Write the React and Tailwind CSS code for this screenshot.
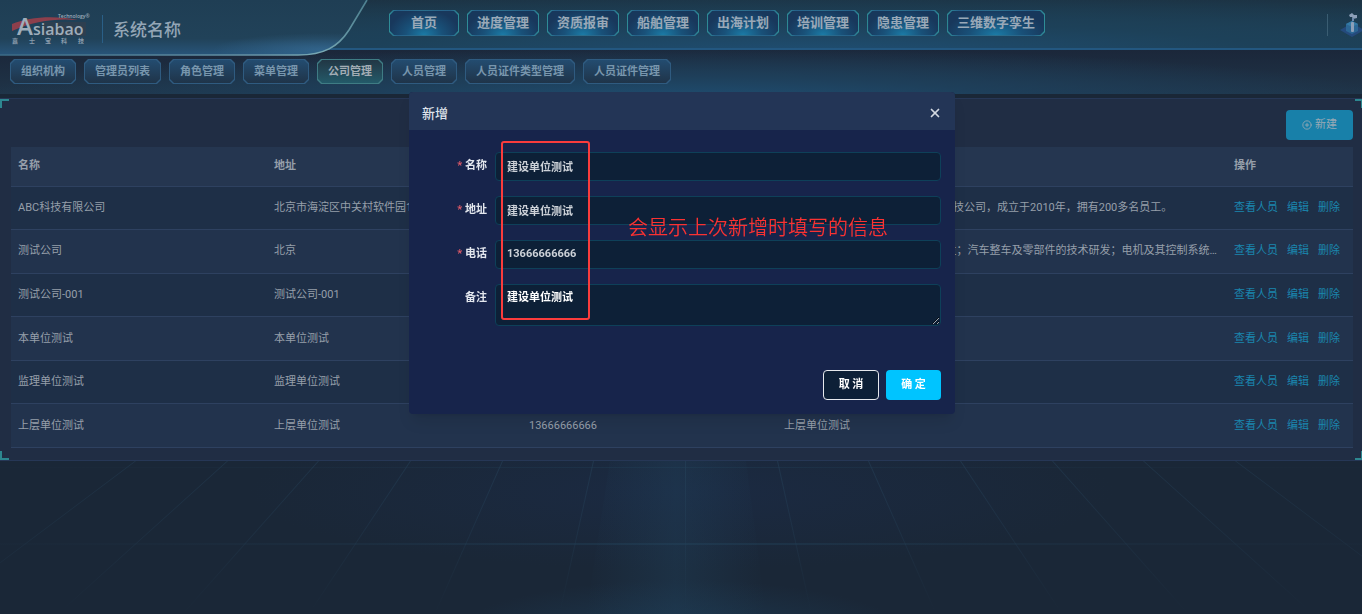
import React, { useState } from 'react';
import { CirclePlus, X } from 'lucide-react';

const mainNav = ['首页', '进度管理', '资质报审', '船舶管理', '出海计划', '培训管理', '隐患管理', '三维数字孪生'];

const subNav = ['组织机构', '管理员列表', '角色管理', '菜单管理', '公司管理', '人员管理', '人员证件类型管理', '人员证件管理'];

const companies = [
  {
    name: 'ABC科技有限公司',
    address: '北京市海淀区中关村软件园1号楼',
    phone: '13800138000',
    remark: 'ABC科技有限公司, 是一家领先的科技公司，成立于2010年，拥有200多名员工。',
  },
  {
    name: '测试公司',
    address: '北京',
    phone: '13666666666',
    remark: '新能源汽车(含动力电池)技术的研发；汽车整车及零部件的技术研发；电机及其控制系统等。',
  },
  { name: '测试公司-001', address: '测试公司-001', phone: '13666666666', remark: '' },
  { name: '本单位测试', address: '本单位测试', phone: '13666666666', remark: '本单位测试' },
  { name: '监理单位测试', address: '监理单位测试', phone: '13666666666', remark: '监理单位测试' },
  { name: '上层单位测试', address: '上层单位测试', phone: '13666666666', remark: '上层单位测试' },
];

const fields = [
  { id: 'name', label: '名称' },
  { id: 'address', label: '地址' },
  { id: 'phone', label: '电话' },
];

function Logo() {
  return (
    <svg className="w-[80px] h-8 shrink-0 overflow-visible" viewBox="0 0 80 32" role="img" aria-label="Asiabao">
      <rect x="30" y="9" width="44" height="14" fill="#2d3f50" />
      <path d="M0 11 C16 4 42 2 66 7 C44 5 22 8 0 18 Z" fill="#8d3f4c" />
      <g fill="#9fadba" fontFamily="Open Sans, sans-serif" fontWeight="600">
        <text x="46" y="5" fontSize="5">Technology®</text>
        <text x="5" y="22" fontSize="24">A</text>
        <text x="21" y="22" fontSize="16">siabao</text>
      </g>
      <g fill="#8b9cac" fontFamily="Noto Sans CJK SC, sans-serif" fontSize="6" fontWeight="700">
        <text x="0" y="30">嘉</text>
        <text x="17" y="30">士</text>
        <text x="33" y="30">宝</text>
        <text x="49" y="30">科</text>
        <text x="66" y="30">技</text>
      </g>
    </svg>
  );
}

function HeaderShape() {
  return (
    <svg className="absolute left-0 top-0 w-[370px] h-[58px]" viewBox="0 0 370 58" aria-hidden="true">
      <defs>
        <linearGradient id="plate" x1="0" y1="0" x2="0" y2="1">
          <stop offset="0" stopColor="#1f3e54" />
          <stop offset="0.7" stopColor="#214259" />
          <stop offset="1" stopColor="#28557a" />
        </linearGradient>
        <radialGradient id="plateGlow" cx="0.88" cy="0.9" r="0.3">
          <stop offset="0" stopColor="#39719c" stopOpacity="0.6" />
          <stop offset="1" stopColor="#39719c" stopOpacity="0" />
        </radialGradient>
        <linearGradient id="plateEdge" x1="0" y1="0" x2="1" y2="0">
          <stop offset="0" stopColor="#3b6a86" />
          <stop offset="0.7" stopColor="#6793a6" />
          <stop offset="0.88" stopColor="#79a9b4" />
          <stop offset="1" stopColor="#4d8090" />
        </linearGradient>
      </defs>
      <path d="M0 0 H367 L349 30 C338 47 324 55 298 55 H0 Z" fill="url(#plate)" />
      <path d="M0 0 H367 L349 30 C338 47 324 55 298 55 H0 Z" fill="url(#plateGlow)" />
      <path d="M367 0 L349 30 C338 47 324 55 298 55 H0" fill="none" stroke="url(#plateEdge)" strokeWidth="1.6" />
    </svg>
  );
}

function PlatformIcon() {
  return (
    <svg className="w-6 h-[26px] shrink-0" viewBox="0 0 24 26" aria-hidden="true">
      <path d="M12 11 L24 18 L12 25 L0 18 Z" fill="#254a7c" />
      <path d="M12 9 L18 12 V19 L12 22 L6 19 V12 Z" fill="#2c6795" />
      <path d="M12 9 L18 12 L12 15 L6 12 Z" fill="#347aa5" />
      <path d="M9 3 L12 1 L14 3 L17 3 L17 6 L13 7 L12 5 L10 5 Z" fill="#8c9fb8" />
      <path d="M12 6 H14 V9 H12 Z" fill="#6d88ab" />
      <rect x="11" y="10" width="3" height="10" rx="1" fill="#8c9fb8" />
    </svg>
  );
}

// perspective grid under the panel
function Floor() {
  const tops = [135, 227, 318, 410, 502, 593, 685, 777, 868, 960, 1052, 1143, 1235];
  return (
    <svg className="absolute inset-0 w-full h-full" viewBox="0 0 1362 153" preserveAspectRatio="none" aria-hidden="true">
      <defs>
        <linearGradient id="ray" x1="0" y1="0" x2="0" y2="1">
          <stop offset="0" stopColor="#26445c" stopOpacity="0.5" />
          <stop offset="0.6" stopColor="#26445c" stopOpacity="0.25" />
          <stop offset="1" stopColor="#26445c" stopOpacity="0" />
        </linearGradient>
        <linearGradient id="row" x1="0" y1="0" x2="1" y2="0">
          <stop offset="0" stopColor="#1f3346" stopOpacity="0.2" />
          <stop offset="0.5" stopColor="#22425a" />
          <stop offset="1" stopColor="#1f3346" stopOpacity="0.2" />
        </linearGradient>
        <linearGradient id="beam" x1="0" y1="0" x2="1" y2="0">
          <stop offset="0" stopColor="#20405a" stopOpacity="0" />
          <stop offset="0.5" stopColor="#20405a" stopOpacity="0.4" />
          <stop offset="1" stopColor="#20405a" stopOpacity="0" />
        </linearGradient>
      </defs>
      <path d="M610 0 H746 L766 153 H586 Z" fill="url(#beam)" />
      {tops.map(x => {
        const end = x + (x - 685) * 0.37;
        return <polygon key={x} points={`${x},0 ${x + 1},0 ${end + 1},153 ${end},153`} fill="url(#ray)" />;
      })}
      <rect x="0" y="6" width="1362" height="1" fill="url(#row)" opacity="0.4" />
      <rect x="0" y="82" width="1362" height="2" fill="url(#row)" opacity="0.5" />
    </svg>
  );
}

const cut = '[clip-path:polygon(4px_0,calc(100%-4px)_0,100%_4px,100%_calc(100%-4px),calc(100%-4px)_100%,4px_100%,0_calc(100%-4px),0_4px)]';

function MainNavButton({ label }) {
  return (
    <button className={`flex h-[26px] min-w-[70px] p-px bg-[linear-gradient(90deg,#2f8f98,#26618a_12%,#2b6f8d_50%,#26618a_88%,#2f8f98)] ${cut}`}>
      <span className={`flex flex-1 items-center justify-center px-[9px] text-[13px] leading-5 font-bold text-[#9aa9b8] bg-[radial-gradient(ellipse_at_50%_100%,#1b7ba6_0%,#195179_38%,#18385c_75%)] ${cut}`}>
        {label}
      </span>
    </button>
  );
}

function SubNavButton({ label, active }) {
  return (
    <button
      aria-current={active ? 'page' : undefined}
      className={`flex h-[25px] p-px ${cut} ${active ? 'bg-[#3f7c84]' : 'bg-[#2f5b80]'}`}
    >
      <span
        className={`flex flex-1 items-center px-[10px] text-[11px] leading-4 font-bold ${cut} ${
          active
            ? 'text-[#a3adb5] bg-linear-to-b from-[#213745] to-[#235a69]'
            : 'text-[#7896ad] bg-linear-to-b from-[#234c70] to-[#1f3449]'
        }`}
      >
        {label}
      </span>
    </button>
  );
}

function CompanyTable() {
  return (
    <table className="w-full h-[301px] table-fixed border-collapse text-[11px] leading-4 text-left text-[#969faa]">
      <thead>
        <tr className="h-[39px] bg-[#253650] border-b border-[#2e4160]">
          <th className="w-64 px-[7px] font-bold">名称</th>
          <th className="w-[19%] px-[7px] font-bold">地址</th>
          <th className="w-[19%] px-[7px] font-bold">电话</th>
          <th className="px-[7px] font-bold">备注</th>
          <th className="w-[126px] px-[7px] font-bold">操作</th>
        </tr>
      </thead>
      <tbody>
        {companies.map(company => (
          <tr key={company.name} className="h-[43px] border-b border-[#2e4160] odd:bg-[#1e2f47] even:bg-[#22334d]">
            <td className="px-[7px] truncate">{company.name}</td>
            <td className="px-[7px] truncate">{company.address}</td>
            <td className="px-[7px] truncate">{company.phone}</td>
            <td className="px-[7px] truncate">{company.remark}</td>
            <td className="px-[7px]">
              <div className="flex gap-[9px] whitespace-nowrap text-[#1a86ae]">
                <a href="#people">查看人员</a>
                <a href="#edit">编辑</a>
                <a href="#delete">删除</a>
              </div>
            </td>
          </tr>
        ))}
      </tbody>
    </table>
  );
}

function CreateDialog({ onClose }) {
  const [form, setForm] = useState({
    name: '建设单位测试',
    address: '建设单位测试',
    phone: '13666666666',
    remark: '建设单位测试',
  });

  const handleChange = e => setForm({ ...form, [e.target.id]: e.target.value });

  return (
    <div className="fixed inset-0 flex items-start justify-center pl-0.5 pt-[92px]">
      <div role="dialog" aria-labelledby="dialog-title" className="relative w-[546px] max-w-full rounded-sm bg-[#17244b] shadow-lg">
        <div className="flex h-[38px] items-center justify-between bg-[#233556] pl-[13px] pr-[13px] pt-1 rounded-t-sm">
          <h2 id="dialog-title" className="pt-0.5 text-[13px] leading-5 font-medium text-[#dfe4ec]">新增</h2>
          <button onClick={onClose} aria-label="关闭" className="text-[#d3d8e0]">
            <X className="w-3.5 h-3.5" strokeWidth={3} />
          </button>
        </div>

        <form className="px-[14px] pt-[22px] pb-[14px] text-[11px] font-bold" onSubmit={e => e.preventDefault()}>
          <div className="flex flex-col gap-[15px]">
            {fields.map(field => (
              <div key={field.id} className="flex items-center gap-2">
                <label htmlFor={field.id} className="w-16 text-right text-[#e3e7ee]">
                  <span className="text-[#e05a68]">*</span> {field.label}
                </label>
                <input
                  id={field.id}
                  value={form[field.id]}
                  onChange={handleChange}
                  className="h-[29px] min-w-0 flex-1 rounded border border-[#0e4059] bg-[#0d2037] px-[11px] pb-0.5 text-[#cdd2d8] outline-none"
                />
              </div>
            ))}
            <div className="flex items-start gap-2">
              <label htmlFor="remark" className="w-16 pt-1.5 text-right text-[#e3e7ee]">备注</label>
              <textarea
                id="remark"
                value={form.remark}
                onChange={handleChange}
                className="block h-[42px] min-w-0 flex-1 rounded border border-[#0e4059] bg-[#0d2037] px-[11px] py-[5px] leading-4 text-white outline-none"
              />
            </div>
          </div>

          <div className="mt-11 flex justify-end gap-[7px]">
            <button type="button" onClick={onClose} className="h-[30px] w-14 rounded border border-[#e6e9ed] bg-[#0d2037] text-white">取 消</button>
            <button type="submit" className="h-[30px] w-[55px] rounded bg-[#00c4ff] text-white">确 定</button>
          </div>
        </form>

        {/* Annotation */}
        <div className="absolute left-[92px] top-[49px] h-[179px] w-[89px] rounded-[3px] border-2 border-[#fa3c3c] pointer-events-none" />
        <p className="absolute left-[219px] top-[122px] whitespace-nowrap text-xl leading-7 font-[350] text-[#fa3232] pointer-events-none">
          会显示上次新增时填写的信息
        </p>
      </div>
    </div>
  );
}

export default function App() {
  const [dialogOpen, setDialogOpen] = useState(true);

  return (
    <div className="flex min-h-screen flex-col overflow-hidden bg-[#1a2737] font-[Roboto,'Noto_Sans_CJK_SC',sans-serif]">
      <header className="relative">
        <div className="flex h-[50px] border-b-2 border-[#235780] bg-[radial-gradient(ellipse_at_60%_110%,#1f4e72_0%,#1d4159_40%,transparent_80%),linear-gradient(#1c3344,#1e4157)]" />
        <nav className="flex h-11 items-end gap-2 px-[10px] pb-[10px] bg-[radial-gradient(ellipse_at_50%_120%,#1f5075_0%,#1e3f5a_35%,transparent_75%),linear-gradient(#1b273a,#1f3448)]">
          {subNav.map(label => (
            <SubNavButton key={label} label={label} active={label === '公司管理'} />
          ))}
        </nav>

        {/* Title plate overlaps the sub navigation */}
        <HeaderShape />
        <div className="absolute inset-x-0 top-0 flex h-[50px] items-start overflow-hidden">
          <div className="flex w-[389px] shrink-0 items-center gap-[10px] pl-3 pt-3">
            <Logo />
            <span className="h-7 w-px bg-[#2a5f87]" />
            <h1 className="pt-0.5 text-[17px] leading-8 font-medium text-[#94a6b6]">系统名称</h1>
          </div>
          <nav className="flex gap-2 pt-[10px]">
            {mainNav.map(label => (
              <MainNavButton key={label} label={label} />
            ))}
          </nav>
          <div className="ml-auto -mr-0.5 flex items-center gap-3 pt-3">
            <span className="h-[22px] w-px bg-[#3a5d72]" />
            <PlatformIcon />
          </div>
        </div>
      </header>

      <main className="relative mt-1 border-y border-[#263756] bg-[#202d44] pl-[11px] pr-[9px] pt-[11px] pb-3">
        <span className="absolute left-0 top-0 h-[9px] w-[9px] border-l-2 border-t-2 border-[#2d8790]" />
        <span className="absolute right-0 top-0 h-[9px] w-[7px] border-r border-t-2 border-[#2d8790]" />
        <span className="absolute left-0 bottom-0 h-[9px] w-[9px] border-l-2 border-b-2 border-[#2d8790]" />
        <span className="absolute right-0 bottom-0 h-[9px] w-[7px] border-r border-b-2 border-[#2d8790]" />
        <div className="mb-[7px] flex justify-end">
          <button
            onClick={() => setDialogOpen(true)}
            className="flex h-[30px] items-center gap-[3px] rounded bg-[#1880a9] px-4 text-[11px] text-[#97a9b5]"
          >
            <CirclePlus className="w-[10px] h-[10px]" /> 新建
          </button>
        </div>
        <CompanyTable />
      </main>

      <div className="relative flex-1 min-h-24 bg-[radial-gradient(ellipse_at_50%_120%,#1d3a52_0%,transparent_25%),radial-gradient(ellipse_at_50%_20%,#1b2a42_0%,transparent_45%)]">
        <Floor />
      </div>

      {dialogOpen && <CreateDialog onClose={() => setDialogOpen(false)} />}
    </div>
  );
}
